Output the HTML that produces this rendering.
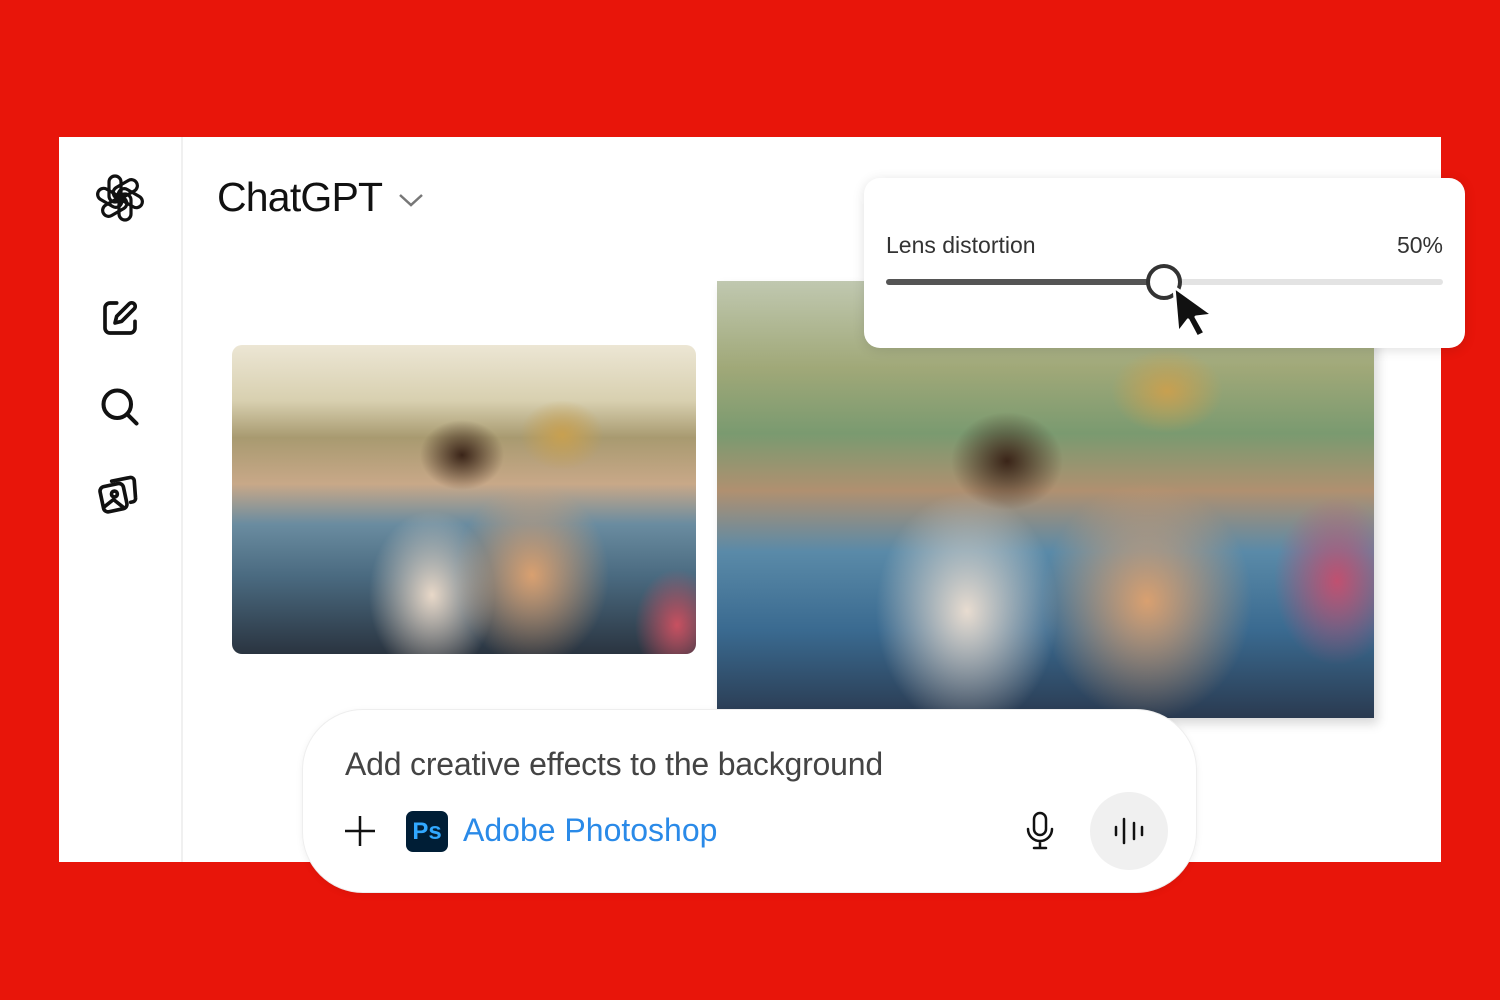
<!DOCTYPE html>
<html><head><meta charset="utf-8"><style>
*{margin:0;padding:0;box-sizing:border-box}
body{width:1500px;height:1000px;background:#e8150a;position:relative;overflow:hidden;font-family:"Liberation Sans",sans-serif}
.panel{position:absolute;left:59px;top:137px;width:1382px;height:725px;background:#fff}
.div{position:absolute;left:181px;top:137px;width:2px;height:725px;background:#f0f0f0}
.title{position:absolute;left:217px;top:174px;font-size:41px;color:#111;letter-spacing:-0.8px}
.ph1{position:absolute;left:232px;top:345px;width:464px;height:309px;border-radius:10px;overflow:hidden;
background:
radial-gradient(ellipse 60px 80px at 445px 280px,#c85060 0,transparent 70%),
radial-gradient(ellipse 110px 130px at 300px 230px,#d9a070 0,transparent 70%),
radial-gradient(ellipse 90px 120px at 200px 250px,#e8d8c8 0,transparent 70%),
radial-gradient(ellipse 60px 50px at 230px 110px,#3a2418 0,transparent 70%),
radial-gradient(ellipse 60px 50px at 330px 90px,#c8a050 0,transparent 70%),
linear-gradient(180deg,#ece6d4 0,#d8d0b0 18%,#a89a70 30%,#c8a888 45%,#6a8ca0 58%,#4a6a80 75%,#2a3440 100%)}
.ph2{position:absolute;left:717px;top:281px;width:657px;height:437px;overflow:hidden;box-shadow:4px 6px 10px rgba(0,0,0,.15);
background:
radial-gradient(ellipse 90px 120px at 620px 300px,#c05070 0,transparent 70%),
radial-gradient(ellipse 150px 170px at 430px 320px,#d9a070 0,transparent 70%),
radial-gradient(ellipse 130px 170px at 250px 330px,#e8dcd0 0,transparent 70%),
radial-gradient(ellipse 80px 70px at 290px 180px,#3a2418 0,transparent 70%),
radial-gradient(ellipse 80px 60px at 450px 110px,#c8a050 0,transparent 70%),
linear-gradient(180deg,#c0c8b0 0,#a0a878 20%,#7a9a70 35%,#b09070 48%,#5a8aa8 62%,#3a6a90 80%,#2a3a50 100%)}
.card{position:absolute;left:864px;top:178px;width:601px;height:170px;background:#fff;border-radius:16px;box-shadow:0 2px 12px rgba(0,0,0,.12)}
.card .l{position:absolute;left:22px;top:54px;font-size:23px;color:#333}
.card .r{position:absolute;right:22px;top:54px;font-size:23px;color:#333}
.track{position:absolute;left:22px;top:101px;width:557px;height:6px;border-radius:3px;background:#e3e3e3}
.fill{position:absolute;left:0;top:0;width:278px;height:6px;border-radius:3px;background:#555}
.knob{position:absolute;left:1146px;top:264px;width:36px;height:36px;border-radius:50%;border:4px solid #333;background:#fff}
.input{position:absolute;left:303px;top:710px;width:893px;height:182px;background:#fff;border-radius:60px;box-shadow:0 0 0 1px #eee,0 2px 8px rgba(0,0,0,.08)}
.prompt{position:absolute;left:345px;top:746px;font-size:32px;color:#444;letter-spacing:-0.2px}
.ps{position:absolute;left:406px;top:811px;width:42px;height:41px;border-radius:7px;background:#001e36;color:#31a8ff;font-weight:bold;font-size:24px;line-height:41px;text-align:center}
.ado{position:absolute;left:463px;top:812px;font-size:32px;color:#2a8ae8}
.voice{position:absolute;left:1090px;top:792px;width:78px;height:78px;border-radius:50%;background:#f0f0f0}
</style></head><body>
<div class="panel"></div><div class="div"></div>
<svg style="position:absolute;left:94px;top:172px" width="52" height="52" viewBox="-26 -26 52 52" fill="none" stroke="#111" stroke-width="3.2">
<g id="p"><rect x="-6" y="-22" width="12" height="26" rx="6" transform="translate(-5 0)"/></g>
<use href="#p" transform="rotate(60)"/><use href="#p" transform="rotate(120)"/><use href="#p" transform="rotate(180)"/><use href="#p" transform="rotate(240)"/><use href="#p" transform="rotate(300)"/>
</svg>
<svg style="position:absolute;left:100px;top:298px" width="40" height="40" viewBox="0 0 24 24" fill="none" stroke="#111" stroke-width="2.2" stroke-linecap="round" stroke-linejoin="round"><path d="M10 3H6a3 3 0 0 0-3 3v12a3 3 0 0 0 3 3h12a3 3 0 0 0 3-3v-4"/><path d="M17.5 3.5a2.1 2.1 0 0 1 3 3L13 14l-4 1 1-4z"/></svg>
<svg style="position:absolute;left:98px;top:385px" width="44" height="44" viewBox="0 0 24 24" fill="none" stroke="#111" stroke-width="2.2" stroke-linecap="round"><circle cx="10.5" cy="10.5" r="7.5"/><path d="M16 16l5 5"/></svg>
<svg style="position:absolute;left:96px;top:472px" width="46" height="44" viewBox="0 0 24 24" fill="none" stroke="#111" stroke-width="2" stroke-linecap="round" stroke-linejoin="round"><path d="M8 5l10-2a2 2 0 0 1 2.3 1.6L21 14a2 2 0 0 1-1.6 2.3l-1 .2"/><rect x="2.5" y="7" width="13" height="14" rx="2.5" transform="rotate(-12 9 14)"/><circle cx="9.5" cy="12" r="1.6"/><path d="M4 19l5-4 5 4"/></svg>
<div class="title">ChatGPT</div>
<svg style="position:absolute;left:398px;top:192px" width="26" height="16" viewBox="0 0 26 16" fill="none" stroke="#777" stroke-width="2.5"><path d="M2 3l11 10 11-10"/></svg>
<div class="ph1"></div>
<div class="ph2"></div>
<div class="card"><div class="l">Lens distortion</div><div class="r">50%</div><div class="track"><div class="fill"></div></div></div>
<div class="knob"></div>
<svg style="position:absolute;left:1168px;top:283px" width="52" height="62" viewBox="0 0 52 62"><path d="M6 4l4 46 10-13 9 17 8-4-9-16 17-2z" fill="#111" stroke="#fff" stroke-width="3" stroke-linejoin="round"/></svg>
<div class="input"></div>
<div class="prompt">Add creative effects to the background</div>
<svg style="position:absolute;left:343px;top:814px" width="34" height="34" viewBox="0 0 34 34" stroke="#111" stroke-width="2.5"><path d="M17 2v30M2 17h30"/></svg>
<div class="ps">Ps</div>
<div class="ado">Adobe Photoshop</div>
<svg style="position:absolute;left:1024px;top:811px" width="32" height="40" viewBox="0 0 32 40" fill="none" stroke="#111" stroke-width="2.5" stroke-linecap="round"><rect x="10" y="2" width="12" height="22" rx="6"/><path d="M4 18a12 12 0 0 0 24 0M16 30v7M10 37h12"/></svg>
<div class="voice"></div>
<svg style="position:absolute;left:1112px;top:815px" width="34" height="32" viewBox="0 0 34 32" stroke="#111" stroke-width="2.5" stroke-linecap="round"><path d="M4 12v8M12 4v24M22 8v16M30 12v8"/></svg>
</body></html>
